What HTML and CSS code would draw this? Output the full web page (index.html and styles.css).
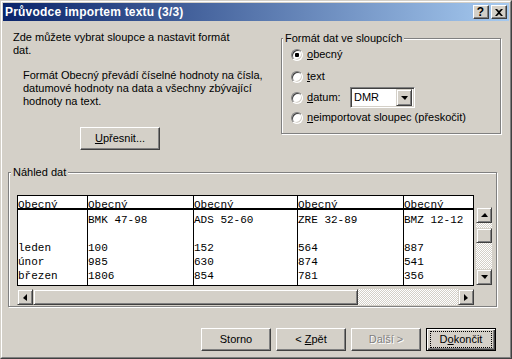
FILE: index.html
```html
<!DOCTYPE html>
<html lang="cs">
<head>
<meta charset="utf-8">
<title>Průvodce importem textu (3/3)</title>
<link rel="stylesheet" href="styles.css">
</head>
<body>
<div class="window">
  <div class="frame">
    <div class="titlebar">
      <span class="title">Průvodce importem textu (3/3)</span>
      <div class="caption-btns">
        <div class="cbtn help">?</div>
        <div class="cbtn close">
          <svg width="8" height="7" viewBox="0 0 8 7"><path d="M0 0h2l2 2 2-2h2L5 3.5 8 7H6L4 5 2 7H0l3-3.5z" fill="#000"/></svg>
        </div>
      </div>
    </div>
    <div class="client">
      <div class="top">
        <div class="intro">
          <p class="lead">Zde můžete vybrat sloupce a nastavit formát dat.</p>
          <p class="info">Formát Obecný převádí číselné hodnoty na čísla, datumové hodnoty na data a všechny zbývající hodnoty na text.</p>
          <div class="btn adv"><span><u>U</u>přesnit...</span></div>
        </div>
        <div class="group fmt">
          <div class="legend">Formát dat ve sloupcích</div>
          <div class="radio r1"><span class="rb checked"></span><span class="rl"><u>o</u>becný</span></div>
          <div class="radio r2"><span class="rb"></span><span class="rl"><u>t</u>ext</span></div>
          <div class="radio r3"><span class="rb"></span><span class="rl datum"><u>d</u>atum:</span>
            <div class="combo"><span class="cv">DMR</span><span class="cdrop"><span class="tri-down"></span></span></div>
          </div>
          <div class="radio r4"><span class="rb"></span><span class="rl"><u>n</u>eimportovat sloupec (přeskočit)</span></div>
        </div>
      </div>
      <div class="group preview">
        <div class="legend">Náhled dat</div>
        <div class="pv">
          <div class="pv-main">
            <div class="grid">
              <div class="col c1">
                <div class="hd">Obecný</div>
                <div class="cell">&nbsp;</div><div class="cell">&nbsp;</div>
                <div class="cell">leden</div><div class="cell">únor</div><div class="cell">březen</div>
              </div>
              <div class="col c2">
                <div class="hd">Obecný</div>
                <div class="cell">BMK 47-98</div><div class="cell">&nbsp;</div>
                <div class="cell">100</div><div class="cell">985</div><div class="cell">1806</div>
              </div>
              <div class="col c3">
                <div class="hd">Obecný</div>
                <div class="cell">ADS 52-60</div><div class="cell">&nbsp;</div>
                <div class="cell">152</div><div class="cell">630</div><div class="cell">854</div>
              </div>
              <div class="col c4">
                <div class="hd">Obecný</div>
                <div class="cell">ZRE 32-89</div><div class="cell">&nbsp;</div>
                <div class="cell">564</div><div class="cell">874</div><div class="cell">781</div>
              </div>
              <div class="col c5">
                <div class="hd">Obecný</div>
                <div class="cell">BMZ 12-12</div><div class="cell">&nbsp;</div>
                <div class="cell">887</div><div class="cell">541</div><div class="cell">356</div>
              </div>
            </div>
            <div class="vscroll">
              <div class="sbtn"><span class="tri-up"></span></div>
              <div class="track v1"></div>
              <div class="thumb vthumb"></div>
              <div class="track v2"></div>
              <div class="sbtn"><span class="tri-down"></span></div>
            </div>
          </div>
          <div class="hscroll">
            <div class="sbtn"><span class="tri-left"></span></div>
            <div class="thumb hthumb"></div>
            <div class="track h1"></div>
            <div class="sbtn"><span class="tri-right"></span></div>
          </div>
        </div>
      </div>
      <div class="buttons">
        <div class="btn"><span>Storno</span></div>
        <div class="btn"><span>&lt; <u>Z</u>pět</span></div>
        <div class="btn disabled"><span>Další &gt;</span></div>
        <div class="btn default"><span class="focus">D<u>o</u>končit</span></div>
      </div>
    </div>
  </div>
</div>
</body>
</html>
```

FILE: styles.css
```css
* { box-sizing: border-box; }
html, body { margin: 0; padding: 0; background: #d4d0c8; }
body {
  font-family: "Liberation Sans", Arial, sans-serif;
  font-size: 11px;
  line-height: 13px;
  color: #000;
}
p { margin: 0; }

.window {
  width: 512px;
  height: 359px;
  background: #d4d0c8;
  border: 1px solid;
  border-color: #d4d0c8 #404040 #404040 #d4d0c8;
}
.frame {
  height: 100%;
  border: 1px solid;
  border-color: #fff #808080 #808080 #fff;
  padding: 1px;
}
.titlebar {
  height: 18px;
  background: linear-gradient(to right, #0a246a, #a6caf0);
  display: flex;
  align-items: center;
  justify-content: space-between;
  padding: 0 2px 0 2px;
}
.title {
  color: #fff;
  font-weight: bold;
  font-size: 12px;
  letter-spacing: 0.2px;
  line-height: 14px;
}
.caption-btns { display: flex; gap: 2px; }
.cbtn {
  width: 16px;
  height: 14px;
  background: #d4d0c8;
  border: 1px solid;
  border-color: #fff #404040 #404040 #fff;
  box-shadow: inset -1px -1px 0 #808080;
  display: flex;
  align-items: center;
  justify-content: center;
}
.help {
  font-weight: bold;
  font-size: 12px;
  line-height: 12px;
  padding-right: 1px;
}
.close svg { display: block; margin-right: 1px; }

.top {
  display: flex;
  align-items: flex-start;
  height: 151px;
}
.intro {
  width: 278px;
  padding-left: 10px;
  padding-top: 10px;
}
.lead { width: 228px; }
.info { margin: 12px 0 0 10px; width: 240px; }

.btn {
  width: 70px;
  height: 23px;
  background: #d4d0c8;
  border: 1px solid;
  border-color: #fff #404040 #404040 #fff;
  box-shadow: inset -1px -1px 0 #808080;
  display: flex;
  align-items: center;
  justify-content: center;
  padding-bottom: 1px;
}
.adv { width: 80px; margin: 19px 0 0 67px; }

.group {
  border: 1px solid #808080;
  box-shadow: inset 1px 1px 0 #fff, 1px 1px 0 #fff;
}
.legend {
  display: block;
  width: fit-content;
  height: 13px;
  background: #d4d0c8;
  margin: -7px 0 0 1px;
  padding: 0 2px 0 2px;
}
.fmt {
  width: 220px;
  height: 96px;
  margin-top: 17px;
}
.radio {
  display: flex;
  align-items: center;
  height: 13px;
  margin-left: 9px;
}
.r1 { margin-top: 3px; }
.r2 { margin-top: 9px; }
.r3 { margin-top: 4px; height: 21px; }
.r4 { margin-top: 3px; }
.rb {
  width: 12px;
  height: 12px;
  border-radius: 50%;
  border: 1px solid;
  border-color: #808080 #fff #fff #808080;
  box-shadow: inset 1px 1px 0 #404040, inset -1px -1px 0 #d4d0c8;
  background: #fff;
  display: flex;
  align-items: center;
  justify-content: center;
  flex: none;
}
.rb.checked::after {
  content: "";
  width: 4px;
  height: 4px;
  background: #000;
  border-radius: 1px;
}
.rl { margin-left: 4px; white-space: nowrap; }
.rl.datum { width: 43px; }
.combo {
  width: 65px;
  height: 21px;
  background: #fff;
  border: 1px solid;
  border-color: #808080 #fff #fff #808080;
  box-shadow: inset 1px 1px 0 #404040, inset -1px -1px 0 #d4d0c8;
  display: flex;
  align-items: center;
  justify-content: space-between;
  padding: 2px;
}
.cv { padding-left: 1px; }
.cdrop {
  width: 16px;
  height: 17px;
  background: #d4d0c8;
  border: 1px solid;
  border-color: #d4d0c8 #404040 #404040 #d4d0c8;
  box-shadow: inset 1px 1px 0 #fff, inset -1px -1px 0 #808080;
  display: flex;
  align-items: center;
  justify-content: center;
}
.tri-down {
  width: 0; height: 0;
  border-left: 4px solid transparent;
  border-right: 3px solid transparent;
  border-top: 4px solid #000;
}
.tri-up {
  width: 0; height: 0;
  border-left: 4px solid transparent;
  border-right: 3px solid transparent;
  border-bottom: 4px solid #000;
}
.tri-left {
  width: 0; height: 0;
  border-top: 4px solid transparent;
  border-bottom: 3px solid transparent;
  border-right: 4px solid #000;
}
.tri-right {
  width: 0; height: 0;
  border-top: 4px solid transparent;
  border-bottom: 3px solid transparent;
  border-left: 4px solid #000;
}

.preview {
  width: 489px;
  height: 135px;
  margin-left: 5px;
}
.preview .legend { margin-left: 2px; }
.pv { margin: 16px 0 0 8px; }
.pv-main { display: flex; align-items: flex-start; }
.grid {
  width: 457px;
  height: 91px;
  background: #fff;
  border: 1px solid #000;
  display: flex;
  overflow: hidden;
  font-family: "Liberation Mono", "Courier New", monospace;
  font-size: 11px;
  line-height: 14px;
}
.col { flex: none; border-right: 1px solid #000; }
.c1 { width: 70px; }
.c2 { width: 106px; }
.c3 { width: 104px; }
.c4 { width: 106px; }
.c5 { width: 80px; border-right: 0; }
.hd {
  height: 14px;
  line-height: 12px;
  padding-top: 3px;
  border-bottom: 2px solid #000;
  white-space: nowrap;
}
.cell { height: 14px; white-space: nowrap; }
.hd + .cell { margin-top: 3px; }

.sbtn {
  width: 16px;
  height: 16px;
  flex: none;
  background: #d4d0c8;
  border: 1px solid;
  border-color: #d4d0c8 #404040 #404040 #d4d0c8;
  box-shadow: inset 1px 1px 0 #fff, inset -1px -1px 0 #808080;
  display: flex;
  align-items: center;
  justify-content: center;
}
.track {
  background: repeating-conic-gradient(#fff 0 25%, #d4d0c8 0 50%) 0 0 / 2px 2px;
}
.thumb {
  background: #d4d0c8;
  border: 1px solid;
  border-color: #d4d0c8 #404040 #404040 #d4d0c8;
  box-shadow: inset 1px 1px 0 #fff, inset -1px -1px 0 #808080;
}
.vscroll {
  width: 16px;
  margin: 12px 0 0 2px;
  height: 78px;
  display: flex;
  flex-direction: column;
}
.v1 { height: 5px; }
.vthumb { height: 15px; }
.v2 { flex: 1; }
.hscroll {
  width: 457px;
  height: 16px;
  margin-top: 3px;
  display: flex;
}
.hthumb { width: 325px; }
.h1 { flex: 1; }

.buttons {
  display: flex;
  gap: 5px;
  margin: 21px 0 0 198px;
}
.btn.disabled { color: #808080; text-shadow: 1px 1px 0 #fff; }
.btn.default {
  border: 1px solid #000;
  box-shadow: inset 1px 1px 0 #fff, inset -1px -1px 0 #404040, inset -2px -2px 0 #808080;
}
.focus {
  outline: 1px dotted #000;
  outline-offset: 0;
  padding: 0 8px;
  line-height: 13px;
  width: 60px;
  height: 15px;
  display: flex;
  align-items: center;
  justify-content: center;
}
```
